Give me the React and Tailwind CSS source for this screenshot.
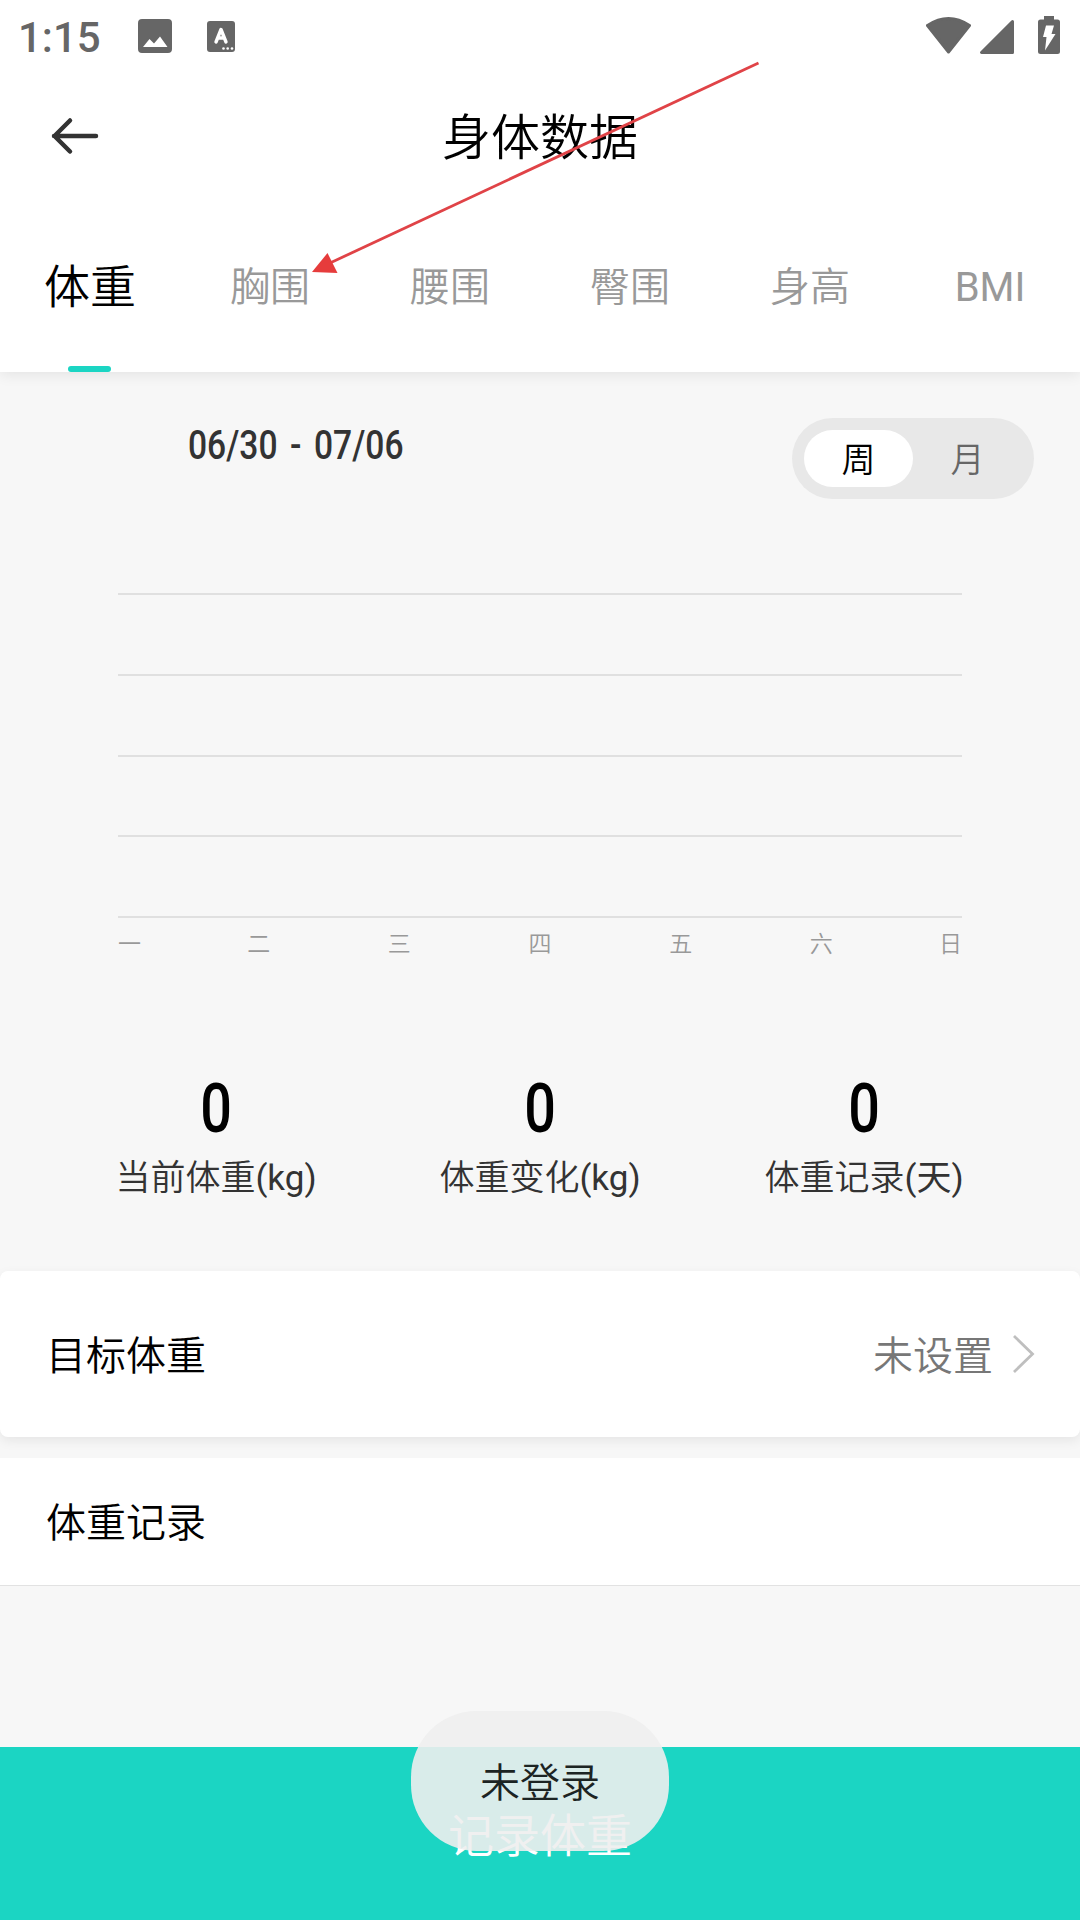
import { useState } from 'react'
import clsx from 'clsx'

const TABS = ['体重', '胸围', '腰围', '臀围', '身高', 'BMI']
const WEEK_DAYS = ['一', '二', '三', '四', '五', '六', '日']
const PERIODS = ['周', '月']

const STATS = [
  { value: 0, label: '当前体重', unit: '(kg)' },
  { value: 0, label: '体重变化', unit: '(kg)' },
  { value: 0, label: '体重记录', unit: '(天)' },
]

function StatusBar() {
  return (
    <div className="h-[72px] shrink-0 flex items-center justify-between pl-[18px] pr-5 text-[#666]">
      <div className="flex items-center">
        <span className="w-[120px] text-[42px] leading-[72px] font-medium pt-1">1:15</span>
        <svg width="34" height="34" viewBox="0 0 34 34" fill="currentColor">
          <path fillRule="evenodd" d="M4 0h26a4 4 0 0 1 4 4v26a4 4 0 0 1-4 4H4a4 4 0 0 1-4-4V4a4 4 0 0 1 4-4zM5 28h24.500L22 17.500l-6 7-4.500-4.500z" />
        </svg>
        <svg className="ml-[35px]" width="28" height="31" viewBox="0 0 28 31" fill="none">
          <rect width="28" height="31" rx="3" fill="#666" />
          <path d="M9 21l5-12.500L19 21M11 17h6" stroke="#fff" strokeWidth="3.400" strokeLinecap="round" strokeLinejoin="round" />
          <circle cx="16.500" cy="27.500" r="1.300" fill="#fff" />
          <circle cx="20.700" cy="27.500" r="1.300" fill="#fff" />
          <circle cx="25" cy="27.500" r="1.300" fill="#fff" />
        </svg>
      </div>
      <svg width="134" height="40" viewBox="0 0 134 40" fill="currentColor" stroke="currentColor" strokeLinejoin="round">
        <path strokeWidth="3" d="M1.500 9.500Q22.500 -4.500 43.500 9.500L22.500 36z" />
        <path strokeWidth="3" d="M55.500 36.500h31V5.500z" />
        <path stroke="none" d="M118 -1h10v4.500h3.500a2.500 2.500 0 0 1 2.500 2.500v29.500a2.500 2.500 0 0 1-2.500 2.500h-17a2.500 2.500 0 0 1-2.500-2.500V6a2.500 2.500 0 0 1 2.500-2.500h3.500z" />
        <path stroke="none" fill="#fff" d="M120 9.500h8l-2.500 8.500h4L119 34.500l1.500-13.500H117z" />
      </svg>
    </div>
  )
}

function Header() {
  return (
    <header className="h-[128px] shrink-0 grid grid-cols-3 items-start px-[50px]">
      <button type="button" className="h-[127px] flex items-center" aria-label="返回">
        <svg width="50" height="40" viewBox="0 0 50 40" fill="none" stroke="#333" strokeWidth="4.500" strokeLinecap="round" strokeLinejoin="round">
          <path d="M46 20H4M20 4.500L4.500 20L20 35.500" />
        </svg>
      </button>
      <h1 className="text-center text-[49px] leading-[133px] text-black">身体数据</h1>
    </header>
  )
}

function Chart() {
  return (
    <div className="mx-[118px] mt-[94px]">
      <div className="h-[325px] flex flex-col justify-between">
        {[0, 1, 2, 3, 4].map(i => <div key={i} className="h-[2px] bg-[#e0e0e0]" />)}
      </div>
      <div className="flex h-[51px] text-[23px] leading-[54px] text-[#999]">
        {WEEK_DAYS.map(d => (
          <span key={d} className="flex-[2] text-center first:flex-1 first:text-left last:flex-1 last:text-right">{d}</span>
        ))}
      </div>
    </div>
  )
}

export default function App() {
  const [tab, setTab] = useState('体重')
  const [period, setPeriod] = useState('周')

  return (
    <div className="relative w-[1080px] h-[1920px] overflow-hidden flex flex-col bg-[#f7f7f7] font-[Roboto,'Noto_Sans_CJK_SC',sans-serif] font-[350]">
      <div className="relative bg-white shadow-[0_2px_14px_rgba(0,0,0,0.09)] shrink-0 flex flex-col">
        <StatusBar />
        <Header />
        {/* Metric tabs */}
        <nav className="h-[172px] flex">
          {TABS.map(t => (
            <button
              key={t}
              type="button"
              onClick={() => setTab(t)}
              className={clsx('w-[180px] flex flex-col items-center justify-between', t === tab ? 'text-[46px] text-black' : 'text-[40px] text-[#999]')}
            >
              <span className={clsx('h-[166px]', t === tab ? 'leading-[174px]' : 'leading-[176px]', t === 'BMI' && 'font-normal')}>{t}</span>
              {t === tab && <span className="w-[43px] h-[6px] mr-px rounded-full bg-[#1bd5c3]" />}
            </button>
          ))}
        </nav>
      </div>

      {/* Date range + period switch */}
      <div className="h-[127px] shrink-0 flex items-start justify-between pl-[188px] pr-[46px] pt-[46px]">
        <span className="origin-left scale-x-[0.84] text-[40px] leading-[56px] font-medium text-[#333] whitespace-nowrap [word-spacing:5px]">06/30 - 07/06</span>
        <div className="w-[242px] h-[81px] rounded-full bg-[#e8e8e8] flex items-center pl-3">
          {PERIODS.map(p => (
            <button
              key={p}
              type="button"
              onClick={() => setPeriod(p)}
              className={clsx('w-[109px] h-[57px] rounded-full text-[34px] leading-[60px]', p === period ? 'bg-white text-black' : 'text-[#666]')}
            >
              {p}
            </button>
          ))}
        </div>
      </div>

      <Chart />

      {/* Summary */}
      <div className="mx-[54px] mt-[98px] h-[204px] shrink-0 grid grid-cols-3 text-center content-start">
        {STATS.map(s => (
          <div key={s.label}>
            <div className="h-[72px] scale-x-[0.82] text-[68px] leading-[84px] font-medium text-black">{s.value}</div>
            <div className="h-[64px] text-[35px] leading-[79px] text-[#333]">
              {s.label}<span className="font-normal">{s.unit}</span>
            </div>
          </div>
        ))}
      </div>

      <div className="h-[166px] shrink-0 bg-white rounded-[8px] shadow-[0_4px_12px_rgba(0,0,0,0.07)] flex items-center justify-between pl-[46px] pr-[45px] text-[40px] leading-[60px]">
        <span className="pt-[6px]">目标体重</span>
        <span className="flex items-center gap-[19px] text-[#777]">
          <span className="pt-[6px]">未设置</span>
          <svg width="23" height="38" viewBox="0 0 23 38" fill="none" stroke="#bfbfbf" strokeWidth="2.800">
            <path d="M2 1L20.500 19L2 37" />
          </svg>
        </span>
      </div>

      <div className="mt-[21px] h-[128px] shrink-0 bg-white border-b border-[#e2e2e2] px-[46px] text-[40px] leading-[132px]">体重记录</div>

      <button type="button" className="mt-auto h-[173px] shrink-0 bg-[#1bd5c3] text-white text-[46px] leading-[173px] pt-[3px]">记录体重</button>

      {/* Toast */}
      <div className="absolute left-[411px] top-[1711px] w-[258px] h-[140px] rounded-[66px] bg-[#eeeeee]/90 text-center text-[40px] leading-[145px] text-[#1c2423]">未登录</div>

      {/* Pointer to the chest tab */}
      <svg className="absolute left-0 top-0 pointer-events-none" width="1080" height="300" viewBox="0 0 1080 300">
        <path d="M758.500 63L330 263" stroke="#e04347" strokeWidth="2.800" />
        <path d="M312 272L327.500 253L337.500 273z" fill="#e63c3c" />
      </svg>
    </div>
  )
}
